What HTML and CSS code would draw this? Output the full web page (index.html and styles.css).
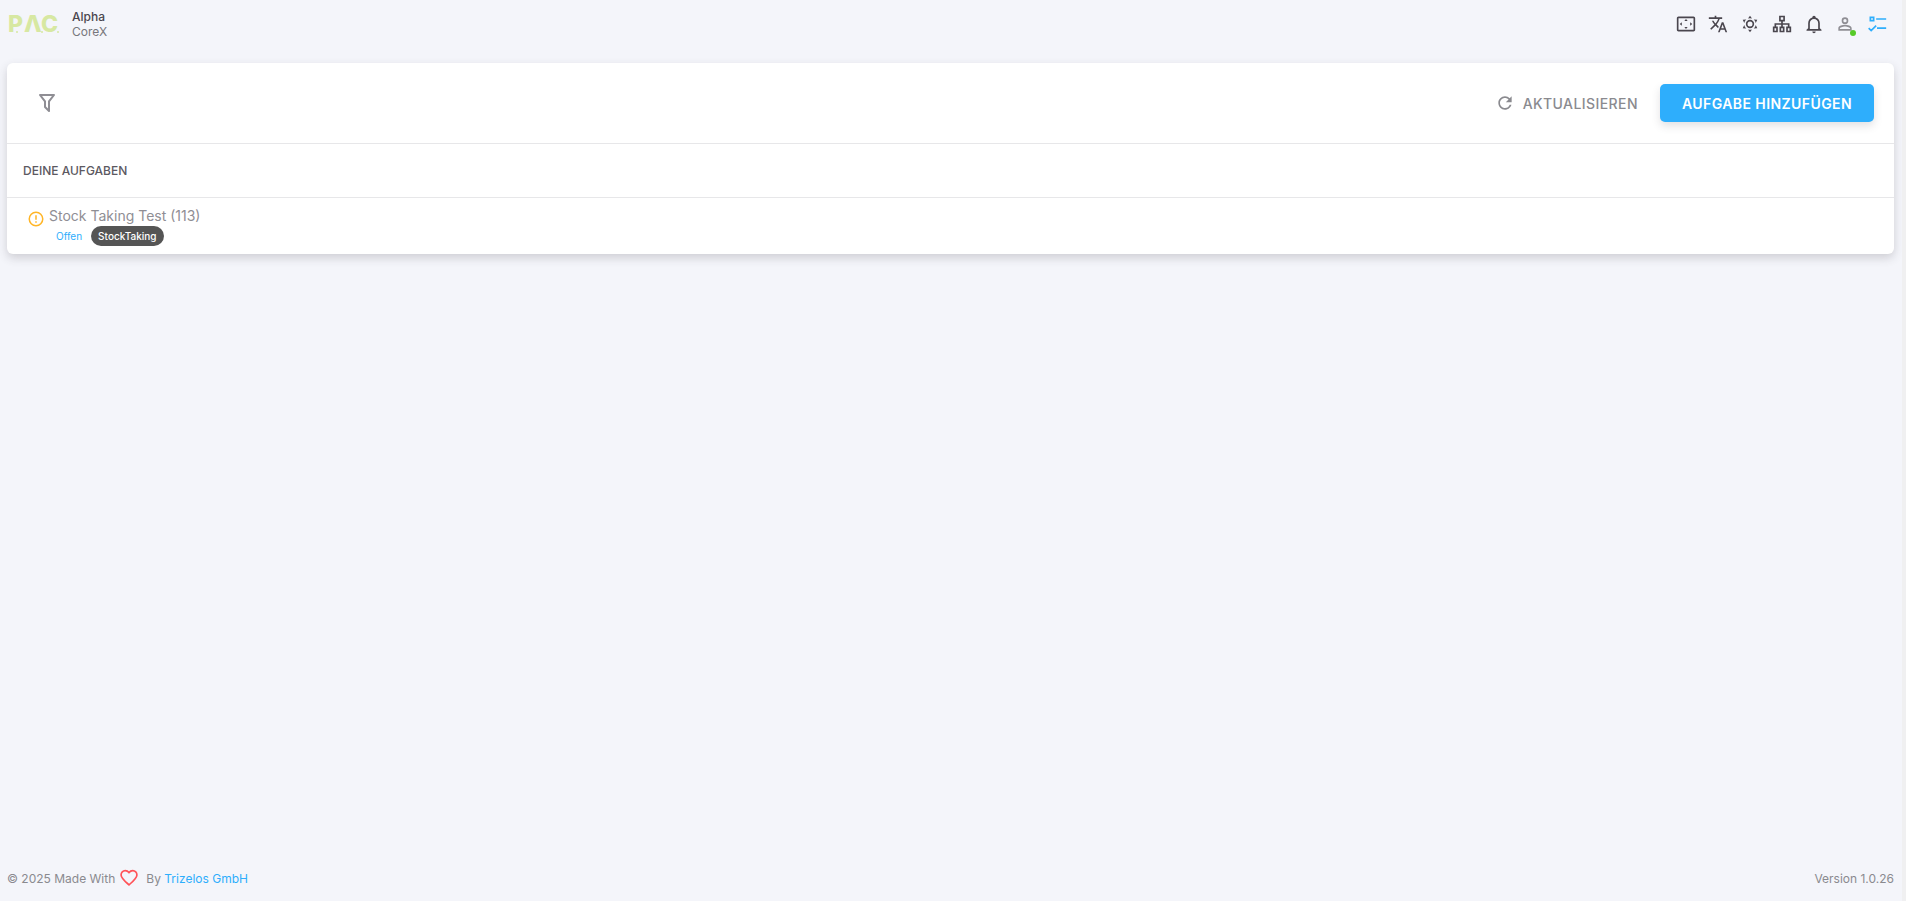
FILE: index.html
```html
<!DOCTYPE html>
<html lang="de">
<head>
    <meta charset="UTF-8">
    <meta name="viewport" content="width=device-width, initial-scale=1.0">
    <title>CoreX</title>
    <link rel="stylesheet" href="styles.css">
</head>
<body>
    <header class="navbar">
        <a href="#" class="brand" aria-label="PAC">
            <svg class="logo" viewBox="0 0 52 32" width="52" height="32">
                <text x="-1" y="24">P</text>
                <text x="15" y="24">Λ</text>
                <text x="32" y="24">C</text>
                <circle cx="8" cy="24" r="1"/>
                <circle cx="33" cy="24" r="1"/>
                <circle cx="49" cy="24" r="1"/>
            </svg>
        </a>
        <div class="tenant">
            <span class="tenant-name">Alpha</span>
            <span>CoreX</span>
        </div>
        <nav class="tools">
            <button type="button" aria-label="Vollbild">
                <svg viewBox="0 0 24 24"><path d="M21 3H3c-1.100 0-2 .9-2 2v14c0 1.100.9 2 2 2h18c1.100 0 2-.9 2-2V5c0-1.100-.9-2-2-2zm0 16H3V5h18zM12 6l2 2.500h-4zM12 18l-2-2.500h4zM4.500 12l2.500-2v4zM19.500 12l-2.500 2v-4z"/></svg>
            </button>
            <button type="button" aria-label="Sprache">
                <svg viewBox="0 0 24 24"><path d="M12.870 15.070l-2.540-2.510.03-.03c1.740-1.940 2.980-4.170 3.710-6.530H17V4h-7V2H8v2H1v2h11.170C11.500 7.920 10.440 9.750 9 11.350 8.070 10.320 7.300 9.190 6.690 8h-2c.73 1.630 1.730 3.170 2.980 4.560l-5.090 5.020L4 19l5-5 3.110 3.110.76-2.040zM18.500 10h-2L12 22h2l1.120-3h4.750L21 22h2l-4.500-12zm-2.620 7l1.620-4.330L19.120 17h-3.240z"/></svg>
            </button>
            <button type="button" aria-label="Design">
                <svg viewBox="0 0 24 24"><circle class="line" cx="12" cy="12" r="4"/><path d="M12 2l2.400 3.400a7 7 0 0 0-4.800 0zM12 22l-2.400-3.400a7 7 0 0 0 4.800 0zM3.300 7l4.200-.4a7 7 0 0 0-2.400 4.200zM20.700 7l-4.200-.4a7 7 0 0 1 2.400 4.200zM3.300 17l1.800-3.800a7 7 0 0 0 2.400 4.200zM20.700 17l-1.800-3.800a7 7 0 0 1-2.400 4.200z"/></svg>
            </button>
            <button type="button" aria-label="Struktur">
                <svg viewBox="0 0 24 24"><path class="line" d="M9.500 3h5v5h-5zM2 16h4v5H2zM10 16h4v5h-4zM18 16h4v5h-4zM12 8v8M4 16v-4h16v4"/></svg>
            </button>
            <button type="button" aria-label="Benachrichtigungen">
                <svg viewBox="0 0 24 24"><path d="M10 21h4c0 1.100-.9 2-2 2s-2-.9-2-2m11-2v1H3v-1l2-2v-6c0-3.100 2.030-5.830 5-6.710V4a2 2 0 0 1 4 0v.29c2.970.88 5 3.610 5 6.710v6l2 2m-4-8a5 5 0 0 0-10 0v7h10v-7z"/></svg>
            </button>
            <button type="button" class="user" aria-label="Benutzer">
                <svg viewBox="0 0 24 24"><path d="M12 4a4 4 0 0 1 4 4 4 4 0 0 1-4 4 4 4 0 0 1-4-4 4 4 0 0 1 4-4m0 2a2 2 0 0 0-2 2 2 2 0 0 0 2 2 2 2 0 0 0 2-2 2 2 0 0 0-2-2m0 7c2.670 0 8 1.330 8 4v3H4v-3c0-2.670 5.330-4 8-4m0 1.900c-2.970 0-6.100 1.460-6.100 2.100v1.100h12.200V17c0-.64-3.130-2.100-6.100-2.100z"/></svg>
                <span class="online"></span>
            </button>
            <button type="button" class="tasks" aria-label="Aufgaben">
                <svg viewBox="0 0 24 24"><path class="line" d="M4 4h4v4H4zM2 17l3 3 6-6M11 6h12M12 17h11"/></svg>
            </button>
        </nav>
    </header>

    <main class="card">
        <div class="toolbar">
            <button type="button" class="filter" aria-label="Filter">
                <svg viewBox="0 0 24 24"><path d="M15 19.880c.04.3-.06.620-.290.830a1 1 0 0 1-1.410 0L9.290 16.700a.99.99 0 0 1-.29-.83v-5.120L4.210 4.620a1 1 0 0 1 .17-1.400c.19-.14.4-.22.620-.22h14c.22 0 .43.080.620.220a1 1 0 0 1 .17 1.400L15 10.750v9.130M7.040 5L11 10.060v5.520l2 2v-7.530L16.960 5H7.040z"/></svg>
            </button>
            <button type="button" class="btn btn-flat">
                <svg viewBox="0 0 24 24"><path d="M17.650 6.350C16.200 4.900 14.210 4 12 4c-4.420 0-8 3.580-8 8s3.580 8 8 8c3.730 0 6.840-2.550 7.730-6h-2.080c-.82 2.330-3.040 4-5.650 4-3.310 0-6-2.690-6-6s2.690-6 6-6c1.660 0 3.140.69 4.220 1.780L13 11h7V4l-2.350 2.350z"/></svg>
                AKTUALISIEREN
            </button>
            <button type="button" class="btn btn-primary">AUFGABE HINZUFÜGEN</button>
        </div>
        <h1 class="list-title">DEINE AUFGABEN</h1>
        <ul class="task-list">
            <li class="task">
                <svg class="warn" viewBox="0 0 24 24"><circle cx="12" cy="12" r="9"/><path d="M12 7v6M12 15v2"/></svg>
                <div>
                    <a href="#" class="task-name">Stock Taking Test (113)</a>
                    <div class="chips">
                        <span class="chip">Offen</span>
                        <span class="chip chip-dark">StockTaking</span>
                    </div>
                </div>
            </li>
        </ul>
    </main>

    <footer class="footer">
        <span>© 2025 Made With</span>
        <svg class="heart" viewBox="0 0 24 24"><path d="M12 20.200l-1.500-1.300C5.500 14.400 2.500 11.600 2.500 8.300a5 5 0 0 1 5-5.100c1.700 0 3.400.9 4.500 2.300 1.100-1.400 2.800-2.300 4.500-2.300a5 5 0 0 1 5 5.100c0 3.300-3 6.100-8 10.600z"/></svg>
        <span>By <a href="#">Trizelos GmbH</a></span>
        <span class="version">Version 1.0.26</span>
    </footer>
</body>
</html>
```
FILE: styles.css
```css
*{
    margin: 0;
    padding: 0;
    box-sizing: border-box;
}
body{
    display: flex;
    flex-direction: column;
    min-height: 100vh;
    padding: 0 8px 0 7px;
    border-right: 4px solid #f0f0f1;
    background-color: #f4f5fa;
    color: #8a8a8f;
    font-family: Inter, "Liberation Sans", sans-serif;
    font-size: 12px;
}
button{
    border: 0;
    background: none;
    color: inherit;
    font: inherit;
    cursor: pointer;
}
a{
    color: #2eaefc;
    text-decoration: none;
}
svg{
    display: block;
    fill: currentColor;
}
.line{
    fill: none;
    stroke: currentColor;
    stroke-width: 2;
}

/* top bar */
.navbar{
    display: flex;
    align-items: center;
    height: 48px;
    margin-bottom: 15px;
}
.logo{
    margin-left: 2px;
    overflow: visible;
    fill: #d7e8a2;
    font-size: 23px;
    font-weight: 800;
}
.tenant{
    display: flex;
    flex-direction: column;
    margin-left: 11px;
    line-height: 15px;
    color: #77777c;
}
.tenant-name{
    color: #4a464e;
    font-weight: 500;
}
.tools{
    display: flex;
    margin-left: auto;
    color: #4a464e;
}
.tools button{
    display: flex;
    align-items: center;
    justify-content: center;
    width: 32px;
    height: 32px;
}
.tools svg{
    width: 20px;
    height: 20px;
}
.tools .user{
    position: relative;
    width: 30px;
    color: #8f8e94;
}
.online{
    position: absolute;
    right: 4px;
    bottom: 4px;
    width: 6px;
    height: 6px;
    border-radius: 50%;
    background-color: #56ca28;
}
.tools .tasks{
    width: 34px;
    color: #2eaefc;
}

/* task card */
.card{
    border-radius: 6px;
    background-color: white;
    box-shadow: 0 4px 10px rgba(58, 53, 65, 0.2);
}
.toolbar{
    display: flex;
    align-items: center;
    height: 81px;
    padding: 0 20px;
    border-bottom: 1px solid #e7e7e9;
}
.filter{
    margin-right: auto;
    padding: 8px;
    color: #8f8e94;
}
.filter svg{
    width: 24px;
    height: 24px;
}
.btn{
    display: flex;
    align-items: center;
    gap: 8px;
    height: 38px;
    padding: 0 22px;
    border-radius: 5px;
    font-size: 14px;
    font-weight: 500;
    letter-spacing: 0.03em;
}
.btn svg{
    width: 20px;
    height: 20px;
}
.btn-primary{
    background-color: #2eaefc;
    box-shadow: 0 4px 8px rgba(58, 53, 65, 0.15);
    color: white;
    font-weight: 600;
}
.list-title{
    padding: 0 16px;
    border-bottom: 1px solid #e7e7e9;
    color: #5c5961;
    font-size: 12px;
    font-weight: 500;
    line-height: 53px;
}
.task-list{
    list-style: none;
}
.task{
    display: flex;
    gap: 4px;
    padding: 8px 20px;
}
.warn{
    width: 18px;
    height: 18px;
    margin-top: 4px;
    fill: none;
    stroke: #ffb526;
    stroke-width: 2;
}
.task-name{
    display: block;
    color: #8f8e94;
    font-size: 14px;
    line-height: 20px;
}
.chips{
    display: flex;
    gap: 2px;
    font-size: 10px;
    line-height: 20px;
}
.chip{
    padding: 0 7px;
    border-radius: 10px;
    color: #2eaefc;
}
.chip-dark{
    background-color: #555555;
    color: white;
    font-weight: 500;
}

/* page footer */
.footer{
    display: flex;
    align-items: center;
    height: 46px;
    margin-top: auto;
}
.heart{
    width: 20px;
    height: 20px;
    margin: 0 7px 0 4px;
    fill: none;
    stroke: #ff5358;
    stroke-width: 2;
}
.version{
    margin-left: auto;
}
```
